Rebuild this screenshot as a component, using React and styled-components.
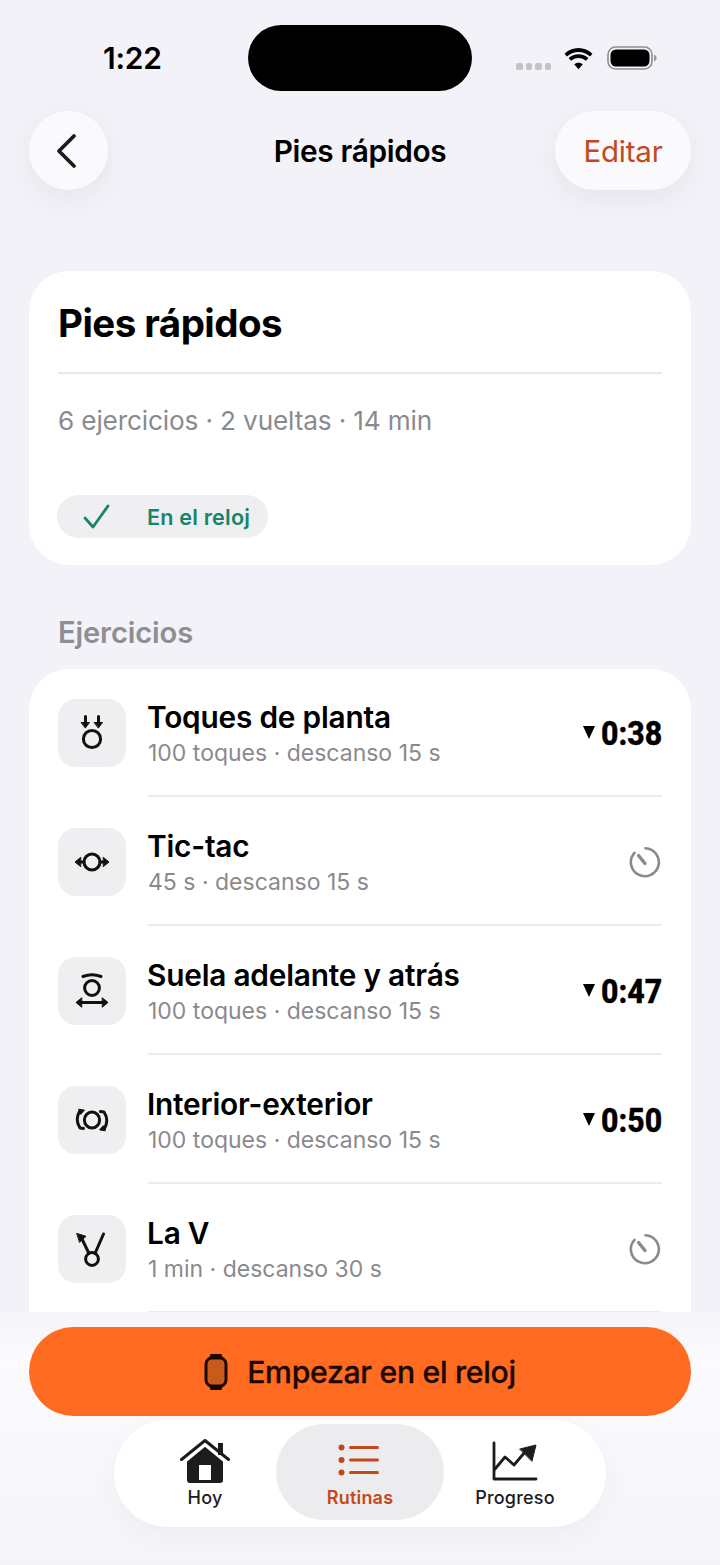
import React from "react";
import styled, { createGlobalStyle } from "styled-components";

const Global = createGlobalStyle`
  html, body { margin: 0; padding: 0; background: #f2f2f8; }
  * { box-sizing: border-box; }
  body { font-family: Inter, "Noto Sans", "Liberation Sans", sans-serif; -webkit-font-smoothing: antialiased; }
`;

const Screen = styled.div`
  width: 720px; height: 1565px; background: #f2f2f8; display: flex; flex-direction: column; overflow: hidden;
`;
const Scroll = styled.div`
  height: 1312px; flex: none; overflow: hidden; display: flex; flex-direction: column;
`;
const StatusBar = styled.div`
  height: 111px; flex: none; padding: 25px 63px 0 103px; display: grid; grid-template-columns: 145px 224px 1fr; align-items: start;
`;
const Time = styled.span`
  font-size: 30px; font-weight: 600; line-height: 66px; color: #000; letter-spacing: -0.2px;
`;
const Island = styled.div`
  width: 224px; height: 66px; border-radius: 33px; background: #000;
`;
const StatusIcons = styled.div`
  height: 66px; display: flex; align-items: center; justify-content: flex-end; gap: 13px;
`;
const Signal = styled.div`
  display: flex; gap: 3px; margin-top: 17px; margin-right: -1px;
`;
const Dot = styled.i`
  width: 6.5px; height: 6.5px; border-radius: 2px; background: #c4c4c8; display: block;
`;
const NavBar = styled.div`
  height: 79px; flex: none; margin: 0 29px; display: grid; grid-template-columns: 136px 1fr 136px; align-items: center;
`;
const RoundButton = styled.div`
  height: 79px; border-radius: 40px; background: #fafafd; box-shadow: 0 10px 30px rgba(60, 60, 90, 0.07);
  display: flex; align-items: center; justify-content: center;
  width: ${(p) => p.$w}px;
  font-size: 29.5px; color: #c2491b; letter-spacing: -0.2px;
`;
const NavTitle = styled.div`
  font-size: 29.8px; font-weight: 600; color: #000; letter-spacing: -0.35px; text-align: center;
`;
const Card = styled.section`
  margin: 81px 29px 0; height: 294px; background: #fff; border-radius: 40px; padding: 29px 29px 0;
  display: flex; flex-direction: column; align-items: flex-start; flex: none;
`;
const CardTitle = styled.h1`
  margin: 0; font-size: 38.5px; font-weight: 700; line-height: 46px; color: #000; letter-spacing: -0.55px;
`;
const Divider = styled.div`
  align-self: stretch; height: 2px; background: #e8e8ea; margin-top: 26px;
`;
const Meta = styled.div`
  margin-top: 30px; font-size: 26.2px; line-height: 34px; color: #8a8a8e; letter-spacing: -0.15px;
`;
const Chip = styled.div`
  margin-top: 57px; margin-left: -1px; width: 211px; height: 43px; border-radius: 22px; background: #efeff1;
  display: flex; align-items: center; padding-left: 26px; gap: 37px;
  font-size: 21.6px; font-weight: 600; color: #14866c; letter-spacing: 0.2px;
`;
const SectionLabel = styled.div`
  margin: 50px 58px 0; height: 36px; font-size: 29.2px; font-weight: 600; line-height: 36px; color: #8e8e93; flex: none; letter-spacing: -0.15px;
`;
const List = styled.div`
  margin: 18px 29px 0; background: #fff; border-radius: 40px 40px 0 0; flex: 1; overflow: hidden;
`;
const Row = styled.div`
  height: 129px; display: flex; position: relative; padding: 31px 29px 0;
  &:first-child { height: 128px; padding-top: 30px; }
`;
const RowIcon = styled.div`
  width: 68px; height: 68px; border-radius: 18px; background: #efeff1; flex: none;
  display: flex; align-items: center; justify-content: center;
`;
const RowBody = styled.div`
  margin-left: 22px; flex: 1; min-width: 0;
`;
const RowTitle = styled.div`
  font-size: 29.8px; font-weight: 600; line-height: 36px; color: #000; letter-spacing: -0.2px; margin-left: -1px;
`;
const RowSub = styled.div`
  font-size: 23px; line-height: 32px; color: #8a8a8e; margin-top: 2px;
`;
const RowDivider = styled.div`
  position: absolute; left: 119px; right: 29px; bottom: 0; height: 2px; background: #ececee;
`;
const Lap = styled.div`
  display: flex; align-items: center; gap: 6px; height: 68px;
`;
const LapArrow = styled.i`
  display: block; width: 0; height: 0; border-left: 6.5px solid transparent; border-right: 6.5px solid transparent; border-top: 13px solid #000; margin-top: -2px;
`;
const LapTime = styled.span`
  font-family: Roboto, "Liberation Sans", sans-serif; font-size: 34px; font-weight: 800; color: #000;
  display: inline-block; width: 61px; white-space: nowrap; transform-origin: left center; transform: scaleX(0.89);
  -webkit-text-stroke: 0.4px #000;
`;
const TimerSlot = styled.div`
  height: 68px; display: flex; align-items: center;
`;
const Dock = styled.div`
  flex: 1; background: linear-gradient(#f5f5f7, #fbfbfe 20%, #f5f5f9); display: flex; flex-direction: column; align-items: center; padding-top: 15px;
`;
const StartButton = styled.div`
  width: 662px; height: 89px; border-radius: 45px; background: #ff6b21; display: flex; align-items: center; justify-content: center; gap: 19px;
  font-size: 30.2px; font-weight: 500; color: #1c0800; letter-spacing: -0.3px; flex: none; -webkit-text-stroke: 0.3px #1c0800;
`;
const TabBar = styled.nav`
  margin-top: 4px; width: 492px; height: 107px; border-radius: 54px; background: #fff; box-shadow: 0 8px 24px rgba(60, 60, 90, 0.05);
  padding: 4px 0 0; display: grid; grid-template-columns: 142px 168px 142px; justify-content: center; align-items: start;
`;
const Tab = styled.div`
  height: 96px; border-radius: 48px; display: flex; flex-direction: column; align-items: center; padding-top: 14px;
  background: ${(p) => (p.$active ? "#ececee" : "transparent")};
  color: ${(p) => (p.$active ? "#c2491b" : "#1c1c1e")};
  font-size: 18px; font-weight: ${(p) => (p.$active ? 600 : 500)};
`;
const TabIcon = styled.div`
  height: 45px; display: flex; align-items: center; justify-content: center;
`;
const TabLabel = styled.span`
  line-height: 24px; margin-top: 3px; letter-spacing: 0.2px;
`;

const Ic = ({ children, s = 36 }) => (
  <svg width={s} height={s} viewBox="0 0 36 36" fill="none" stroke="#111" strokeWidth="3" strokeLinecap="round" strokeLinejoin="round">{children}</svg>
);

const IconDown = () => (
  <Ic>
    <circle cx="18" cy="24" r="8.6" />
    <path d="M11.5 1.5v7M24.5 1.5v7" />
    <path d="M7.5 7.5h8L11.5 12.8zM20.5 7.5h8L24.5 12.8z" fill="#111" strokeWidth="1" />
  </Ic>
);
const IconSide = () => (
  <Ic>
    <circle cx="18" cy="18" r="8" />
    <path d="M10 18H5M26 18h5" />
    <path d="M6.5 13.5L1 18l5.5 4.5zM29.5 13.5L35 18l-5.5 4.5z" fill="#111" strokeWidth="1" />
  </Ic>
);
const IconFront = () => (
  <Ic>
    <path d="M9 3.5c5.5-2 12.5-2 18 0" />
    <circle cx="18" cy="15" r="7.4" />
    <path d="M5 29.5h26" />
    <path d="M7.5 25L2 29.5 7.5 34zM28.5 25L34 29.5 28.5 34z" fill="#111" strokeWidth="1" />
  </Ic>
);
const IconInOut = () => (
  <Ic>
    <ellipse cx="18" cy="18" rx="7.6" ry="8" />
    <path d="M5.5 9.5c-2.8 5-2.8 11.5.5 16.5l3.5.4" />
    <path d="M30.5 26.5c2.8-5 2.8-11.5-.5-16.5l-3.5-.4" />
    <path d="M5 7.5l5 .8-3.3 3.6zM31 28.5l-5-.8 3.3-3.6z" fill="#111" strokeWidth="1.4" />
  </Ic>
);
const IconV = () => (
  <Ic>
    <circle cx="18" cy="28" r="6.4" />
    <path d="M15 22.5L7 6" />
    <path d="M21 22.5L29.5 3" />
    <path d="M3 2.5l9 2.8-6.2 5.8z" fill="#111" strokeWidth="1" />
  </Ic>
);
const TimerIcon = () => (
  <svg width="34" height="34" viewBox="0 0 34 34" fill="none" stroke="#8a8a8e" strokeWidth="2.6" strokeLinecap="round">
    <path d="M17.5 3.2A14 14 0 1 1 6.5 7.8" />
    <path d="M10.5 10.5L17 18.5" strokeWidth="3.4" />
  </svg>
);
const Rows = [
  { I: IconDown, t: "Toques de planta", s: "100 toques · descanso 15 s", lap: "0:38" },
  { I: IconSide, t: "Tic-tac", s: "45 s · descanso 15 s" },
  { I: IconFront, t: "Suela adelante y atrás", s: "100 toques · descanso 15 s", lap: "0:47" },
  { I: IconInOut, t: "Interior-exterior", s: "100 toques · descanso 15 s", lap: "0:50" },
  { I: IconV, t: "La V", s: "1 min · descanso 30 s" },
];

export default function App() {
  return (
    <Screen>
      <Global />
      <Scroll>
        <StatusBar>
          <Time>1:22</Time>
          <Island />
          <StatusIcons>
            <Signal><Dot /><Dot /><Dot /><Dot /></Signal>
            <svg width="31" height="23" viewBox="0 0 30 22" fill="#000">
              <path d="M15 4.6c4.4 0 8.3 1.7 11.2 4.5l2.3-2.6C24.9 3 20.2.9 15 .9S5.1 3 1.5 6.5l2.3 2.6C6.7 6.3 10.6 4.6 15 4.6z" />
              <path d="M15 10.4c2.8 0 5.3 1.1 7.2 2.8l2.4-2.6C22 8.2 18.7 6.8 15 6.8s-7 1.4-9.6 3.8l2.4 2.6c1.9-1.7 4.4-2.8 7.2-2.8z" />
              <path d="M15 15c-1.6 0-3.1.6-4.2 1.6L15 21.5l4.2-4.9c-1.1-1-2.6-1.6-4.2-1.6z" />
            </svg>
            <svg width="50" height="24" viewBox="0 0 50 24">
              <rect x="1" y="1" width="44" height="22" rx="7.5" fill="none" stroke="#8f8f93" strokeWidth="1.6" />
              <rect x="3.5" y="3.5" width="39" height="17" rx="5.5" fill="#000" />
              <path d="M47 8.5v7c1.8-.7 2.6-2 2.6-3.5S48.8 9.2 47 8.5z" fill="#9a9a9e" />
            </svg>
          </StatusIcons>
        </StatusBar>
        <NavBar>
          <RoundButton $w={79}>
            <svg width="30" height="38" viewBox="0 0 30 38" fill="none" stroke="#1c1c1e" strokeWidth="3.8" strokeLinecap="round" strokeLinejoin="round" style={{ marginLeft: -3 }}>
              <path d="M22 4L7 19l15 15" />
            </svg>
          </RoundButton>
          <NavTitle>Pies rápidos</NavTitle>
          <RoundButton $w={136}>Editar</RoundButton>
        </NavBar>
        <Card>
          <CardTitle>Pies rápidos</CardTitle>
          <Divider />
          <Meta>6 ejercicios · 2 vueltas · 14 min</Meta>
          <Chip>
            <svg width="27" height="26" viewBox="0 0 27 26" fill="none" stroke="#14866c" strokeWidth="2.8" strokeLinecap="round" strokeLinejoin="round">
              <path d="M2 14l8 9L25 2" />
            </svg>
            En el reloj
          </Chip>
        </Card>
        <SectionLabel>Ejercicios</SectionLabel>
        <List>
          {Rows.map(({ I, t, s, lap }) => (
            <Row key={t}>
              <RowIcon><I /></RowIcon>
              <RowBody>
                <RowTitle>{t}</RowTitle>
                <RowSub>{s}</RowSub>
              </RowBody>
              {lap ? (
                <Lap><LapArrow /><LapTime>{lap}</LapTime></Lap>
              ) : (
                <TimerSlot><TimerIcon /></TimerSlot>
              )}
              <RowDivider />
            </Row>
          ))}
        </List>
      </Scroll>
      <Dock>
        <StartButton>
          <svg width="24" height="36" viewBox="0 0 24 36">
            <path d="M6.5 0h11l1.5 5H5zM6.5 36h11l1.5-5H5z" fill="#1c0800" />
            <rect x="2" y="4" width="20" height="28" rx="6" fill="#c85a1c" stroke="#1c0800" strokeWidth="3" />
          </svg>
          Empezar en el reloj
        </StartButton>
        <TabBar>
          <Tab>
            <TabIcon>
              <svg width="50" height="44" viewBox="0 0 50 44">
                <path d="M7 21L25 6.5 43 21v20a3 3 0 0 1-3 3H10a3 3 0 0 1-3-3z" fill="#1c1c1e" />
                <rect x="19" y="26" width="12" height="15" fill="#fff" />
                <rect x="38" y="4" width="5" height="12" fill="#1c1c1e" />
                <path d="M25 6.500L5 23M25 6.500L45 23" fill="none" stroke="#fff" strokeWidth="2" />
                <path d="M1.5 20.5L25 1.5l23.5 19" fill="none" stroke="#1c1c1e" strokeWidth="3" strokeLinecap="round" strokeLinejoin="round" />
              </svg>
            </TabIcon>
            <TabLabel>Hoy</TabLabel>
          </Tab>
          <Tab $active>
            <TabIcon>
              <svg width="44" height="34" viewBox="0 0 44 34" fill="#c2491b">
                <circle cx="3.5" cy="3.5" r="3" /><circle cx="3.5" cy="16" r="3" /><circle cx="3.5" cy="28.5" r="3" />
                <rect x="11" y="2" width="30" height="3" rx="1.5" /><rect x="11" y="14.5" width="30" height="3" rx="1.5" /><rect x="11" y="27" width="30" height="3" rx="1.5" />
              </svg>
            </TabIcon>
            <TabLabel>Rutinas</TabLabel>
          </Tab>
          <Tab>
            <TabIcon>
              <svg width="46" height="40" viewBox="0 0 46 40" fill="none" stroke="#1c1c1e" strokeWidth="2.8" strokeLinecap="round" strokeLinejoin="round">
                <path d="M2 2v36h42" />
                <path d="M3 28l10-12 9 8 11-13" />
                <path d="M28 8l16-4-4 16z" fill="#1c1c1e" strokeWidth="1" />
              </svg>
            </TabIcon>
            <TabLabel>Progreso</TabLabel>
          </Tab>
        </TabBar>
      </Dock>
    </Screen>
  );
}
